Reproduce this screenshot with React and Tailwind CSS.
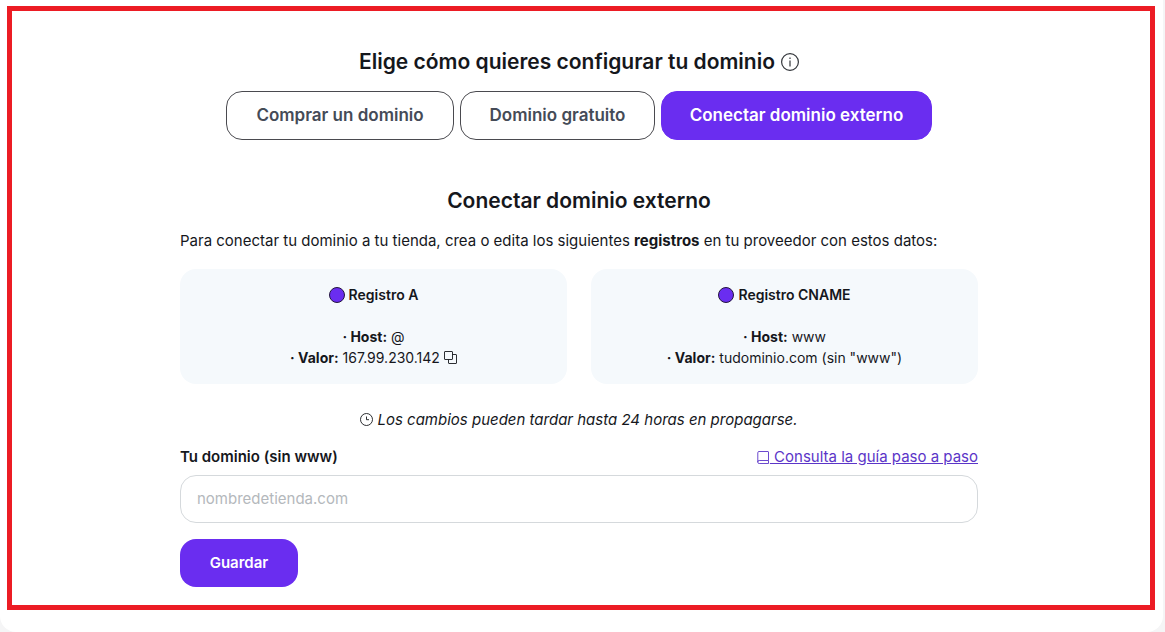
import React from 'react';

const tabs = [
  { label: 'Comprar un dominio', className: 'w-[228px] border-[#4a4a4f] bg-white text-[#454b57]' },
  { label: 'Dominio gratuito', className: 'w-[195px] border-[#4a4a4f] bg-white text-[#454b57]' },
  { label: 'Conectar dominio externo', className: 'w-[271px] border-[#6a2df0] bg-[#6a2df0] text-white' },
];

const InfoIcon = () => (
  <svg className="size-[18px] text-[#33363b]" viewBox="0 0 18 18" fill="none" stroke="currentColor" aria-hidden="true">
    <circle cx="9" cy="9" r="8.4" strokeWidth="1.2" />
    <path d="M9 7.4v6M9 4.6v1.3" strokeWidth="1.2" />
  </svg>
);

const CopyIcon = () => (
  <svg className="size-[13px]" viewBox="0 0 13 13" fill="none" stroke="currentColor" strokeWidth=".9" aria-hidden="true">
    <path d="M1 .5h7a.5.5 0 0 1 .5.5v7a.5.5 0 0 1-.5.5H1a.5.5 0 0 1-.5-.5V1A.5.5 0 0 1 1 .5z" />
    <path d="M8.5 3.5H12a.5.5 0 0 1 .5.5v8a.5.5 0 0 1-.5.5H5a.5.5 0 0 1-.5-.5V8.5" />
  </svg>
);

const ClockIcon = () => (
  <svg className="size-[13px]" viewBox="0 0 13 13" fill="none" stroke="currentColor" strokeWidth=".9" aria-hidden="true">
    <circle cx="6.5" cy="6.5" r="6" />
    <path d="M6.5 3.5v3.2H9" />
  </svg>
);

const BookIcon = () => (
  <svg className="inline size-[13px] align-[-2px]" viewBox="0 0 13 13" fill="none" stroke="currentColor" strokeWidth=".9" aria-hidden="true">
    <path d="M11.5 9.5V1a.5.5 0 0 0-.5-.5H2A1.2 1.2 0 0 0 .8 1.7v9.3M11.5 9.5H2.2a1.5 1.5 0 0 0 0 3h9.3" />
    <path d="M11.5 9.5v3" />
  </svg>
);

const Dot = () => (
  <svg className="size-4" viewBox="0 0 16 16" aria-hidden="true">
    <circle cx="8" cy="8" r="7.5" fill="#6a2df0" stroke="#24163f" />
  </svg>
);

const RecordCard = ({ title, host, value, copyable }) => (
  <div className="flex-1 rounded-2xl bg-[#f5f9fc] pt-[15px] pb-4 text-center text-sm leading-[21px]">
    <h3 className="flex items-center justify-center gap-1 font-semibold">
      <Dot />
      {title}
    </h3>
    <p className="mt-[21px]">
      <strong>· Host:</strong> {host}
    </p>
    <p className="flex items-center justify-center gap-1">
      <strong>· Valor:</strong> {value}
      {copyable && (
        <button type="button" aria-label="Copiar valor" className="cursor-pointer">
          <CopyIcon />
        </button>
      )}
    </p>
  </div>
);

export default function App() {
  return (
    <div className="bg-[#f5f5f6] pr-[2px] font-[Inter,sans-serif] text-[15px] leading-[21px] text-[#15171c]">
      <div className="min-h-screen rounded-b-2xl bg-white pt-[6px] pr-2 pl-[7px]">
        <main className="border-5 border-[#ec1c24] pt-9 pr-1 pb-[18px]">
          <div className="mx-auto max-w-[798px]">
            <h1 className="flex items-center justify-center gap-[6px] text-[21px] leading-[30px] font-semibold">
              Elige cómo quieres configurar tu dominio
              <InfoIcon />
            </h1>

            <div className="mt-[14px] flex justify-center gap-[6px]">
              {tabs.map((tab) => (
                <button
                  key={tab.label}
                  type="button"
                  className={`h-[49px] cursor-pointer rounded-2xl border text-[17px] font-semibold ${tab.className}`}
                >
                  {tab.label}
                </button>
              ))}
            </div>

            <section className="mt-[46px]">
              <h2 className="text-center text-[21px] leading-[30px] font-semibold">Conectar dominio externo</h2>
              <p className="mt-[14px]">
                Para conectar tu dominio a tu tienda, crea o edita los siguientes <strong>registros</strong> en tu
                proveedor con estos datos:
              </p>

              <div className="mt-[18px] flex gap-6">
                <RecordCard title="Registro A" host="@" value="167.99.230.142" copyable />
                <RecordCard title="Registro CNAME" host="www" value={'tudominio.com (sin "www")'} />
              </div>

              <p className="mt-[25px] flex items-center justify-center gap-1 italic">
                <ClockIcon />
                Los cambios pueden tardar hasta 24 horas en propagarse.
              </p>

              <form>
                <div className="mt-4 flex items-center justify-between">
                  <label htmlFor="domain" className="font-semibold">
                    Tu dominio (sin www)
                  </label>
                  <a href="#guia" className="text-[#5b35c8] underline">
                    <BookIcon /> Consulta la guía paso a paso
                  </a>
                </div>
                <input
                  id="domain"
                  type="text"
                  placeholder="nombredetienda.com"
                  className="mt-2 h-12 w-full rounded-2xl border border-[#d5d9dc] bg-white px-4 pb-[2px] placeholder:text-[#b4b8bc]"
                />
                <button
                  type="submit"
                  className="mt-4 h-12 w-[118px] cursor-pointer rounded-2xl bg-[#6a2df0] pb-[2px] font-semibold text-white"
                >
                  Guardar
                </button>
              </form>
            </section>
          </div>
        </main>
      </div>
    </div>
  );
}
